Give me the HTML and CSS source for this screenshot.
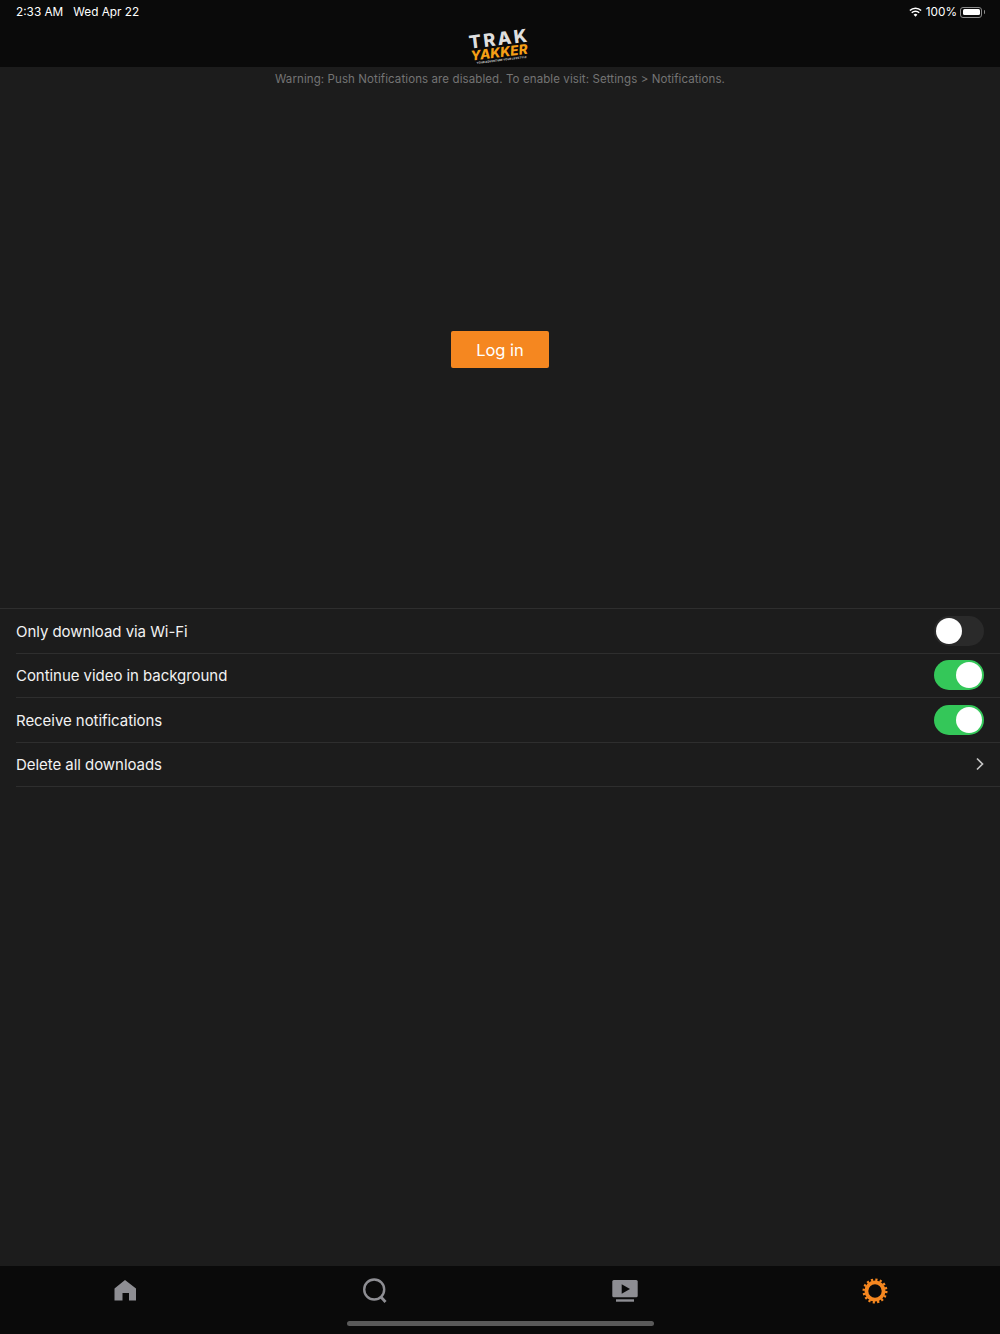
FILE: index.html
```html
<!DOCTYPE html>
<html lang="en">
<head>
    <meta charset="UTF-8">
    <meta name="viewport" content="width=device-width, initial-scale=1.0">
    <title>Settings</title>
    <link rel="stylesheet" href="styles.css">
</head>
<body>
    <header class="top-bar">
        <div class="status-bar">
            <div class="status-time">
                <span>2:33 AM</span>
                <span>Wed Apr 22</span>
            </div>
            <div class="status-right">
                <svg class="wifi-icon" width="13" height="10" viewBox="0 0 14 11">
                    <path d="M7 10.6 4.9 8.4a3 3 0 0 1 4.2 0z" fill="#fff"/>
                    <path d="M2.9 6.4a5.8 5.8 0 0 1 8.2 0" fill="none" stroke="#fff" stroke-width="1.7"/>
                    <path d="M.8 3.9a8.8 8.8 0 0 1 12.4 0" fill="none" stroke="#fff" stroke-width="1.7"/>
                </svg>
                <span>100%</span>
                <div class="battery"><div class="battery-fill"></div></div>
                <div class="battery-tip"></div>
            </div>
        </div>
        <div class="logo">
            <div class="logo-trak">TRAK</div>
            <div class="logo-yakker">YAKKER</div>
            <div class="logo-tagline">YOUR ADVENTURE YOUR LIFESTYLE</div>
        </div>
    </header>

    <p class="warning">Warning: Push Notifications are disabled. To enable visit: Settings &gt; Notifications.</p>

    <div class="login-area">
        <button class="btn-login">Log in</button>
    </div>

    <div class="settings-list">
        <div class="setting-row">
            <span>Only download via Wi-Fi</span>
            <div class="switch"><div class="knob"></div></div>
        </div>
        <div class="setting-row">
            <span>Continue video in background</span>
            <div class="switch switch-on"><div class="knob"></div></div>
        </div>
        <div class="setting-row">
            <span>Receive notifications</span>
            <div class="switch switch-on"><div class="knob"></div></div>
        </div>
        <div class="setting-row">
            <span>Delete all downloads</span>
            <svg class="chevron" width="10" height="14" viewBox="0 0 10 14">
                <path d="M2 1.5 7.5 7 2 12.5" fill="none" stroke="#c4c4c4" stroke-width="1.7"/>
            </svg>
        </div>
    </div>

    <div class="spacer"></div>

    <nav class="tab-bar">
        <div class="tab">
            <svg width="22" height="22" viewBox="0 0 22 22">
                <path d="M11 0 22 8.500V20.500H15V13H8.500V20.500H.5V8.500z" fill="#8e8e93"/>
            </svg>
        </div>
        <div class="tab">
            <svg width="26" height="26" viewBox="0 0 26 26">
                <circle cx="12.200" cy="11.500" r="10" fill="none" stroke="#8e8e93" stroke-width="2.400"/>
                <path d="M19 19 23.500 24" fill="none" stroke="#8e8e93" stroke-width="2.800"/>
            </svg>
        </div>
        <div class="tab">
            <svg width="26" height="22" viewBox="0 0 26 22">
                <rect x="0.300" y="0" width="25.400" height="17.300" rx="1.500" fill="#8e8e93"/>
                <path d="M9.700 4.300 18 9 9.700 13.700z" fill="#0a0a0a"/>
                <rect x="4" y="19.300" width="18" height="2.400" fill="#8e8e93"/>
            </svg>
        </div>
        <div class="tab">
            <svg width="26" height="26" viewBox="0 0 26 26">
                <circle cx="13" cy="13" r="8.600" fill="none" stroke="#f58720" stroke-width="3.800"/>
                <circle cx="13" cy="13" r="11.300" fill="none" stroke="#f58720" stroke-width="2.400" stroke-dasharray="2.200 2.237"/>
            </svg>
        </div>
        <div class="home-indicator"></div>
    </nav>
</body>
</html>
```

FILE: styles.css
```css
* {
    box-sizing: border-box;
}
html, body {
    height: 100%;
}
body {
    display: flex;
    flex-direction: column;
    height: 1334px;
    margin: 0;
    background: #1c1c1c;
    color: #fff;
    font-family: Inter, "Noto Sans", sans-serif;
    overflow: hidden;
}
.top-bar {
    position: relative;
    height: 67px;
    background: #0a0a0a;
}
.status-bar {
    display: flex;
    justify-content: space-between;
    align-items: center;
    height: 23px;
    padding: 0 15px 0 16px;
    font-size: 11.800px;
    color: #fff;
}
.status-time {
    display: flex;
    gap: 10px;
}
.status-right {
    display: flex;
    align-items: center;
    margin-top: 1px;
}
.wifi-icon {
    margin-right: 4px;
}
.battery {
    width: 22px;
    height: 11px;
    margin-left: 3px;
    padding: 1.500px;
    border: 1px solid #8a8a8a;
    border-radius: 3px;
}
.battery-fill {
    height: 100%;
    background: #fff;
    border-radius: 1.500px;
}
.battery-tip {
    width: 1px;
    height: 4px;
    margin-left: 2px;
    background: #8a8a8a;
    border-radius: 0 1px 1px 0;
}
.logo {
    position: absolute;
    top: 30px;
    left: 470px;
    width: 62px;
    height: 36px;
    font-weight: 800;
    line-height: 1;
    white-space: nowrap;
    transform: rotate(-7deg);
}
.logo-trak {
    font-size: 18px;
    letter-spacing: 2.300px;
    color: #dedede;
}
.logo-yakker {
    margin-top: -2px;
    font-size: 13.500px;
    font-style: italic;
    letter-spacing: 0.100px;
    color: #f59f16;
}
.logo-tagline {
    margin-top: -1px;
    padding-left: 5px;
    font-size: 2.800px;
    color: #bdbdbd;
}
.warning {
    height: 23px;
    margin: 0;
    padding-top: 5px;
    text-align: center;
    font-size: 11.500px;
    line-height: 15px;
    letter-spacing: 0.100px;
    color: #747474;
}
.login-area {
    display: flex;
    justify-content: center;
    align-items: center;
    height: 518px;
}
.btn-login {
    width: 98px;
    height: 37px;
    padding: 2px 0 0;
    background-color: #f58720;
    color: #fff;
    border: none;
    border-radius: 2px;
    font-family: inherit;
    font-size: 16.500px;
}
.settings-list {
    border-top: 1px solid #2e2e2e;
}
.setting-row {
    display: flex;
    justify-content: space-between;
    align-items: center;
    height: 44.500px;
    margin-left: 16px;
    padding-right: 16px;
    border-bottom: 1px solid #2e2e2e;
    font-size: 15px;
    letter-spacing: -0.050px;
    color: #f2f2f2;
}
.setting-row span {
    padding-top: 1px;
}
.switch {
    display: flex;
    align-items: center;
    width: 50px;
    height: 30px;
    padding: 0 2px;
    background: #2a2a2a;
    border-radius: 15px;
}
.switch-on {
    justify-content: flex-end;
    background: #34c759;
}
.knob {
    width: 26px;
    height: 26px;
    background: #fff;
    border-radius: 50%;
}
.chevron {
    margin-right: -1px;
}
.spacer {
    flex: 1;
}
.tab-bar {
    position: relative;
    display: flex;
    height: 68px;
    padding-top: 12px;
    background: #0a0a0a;
}
.tab {
    display: flex;
    justify-content: center;
    flex: 1;
    height: 26px;
    align-items: center;
}
.home-indicator {
    position: absolute;
    left: 347px;
    bottom: 8px;
    width: 307px;
    height: 5px;
    background: #5a5a5a;
    border-radius: 3px;
}
```
